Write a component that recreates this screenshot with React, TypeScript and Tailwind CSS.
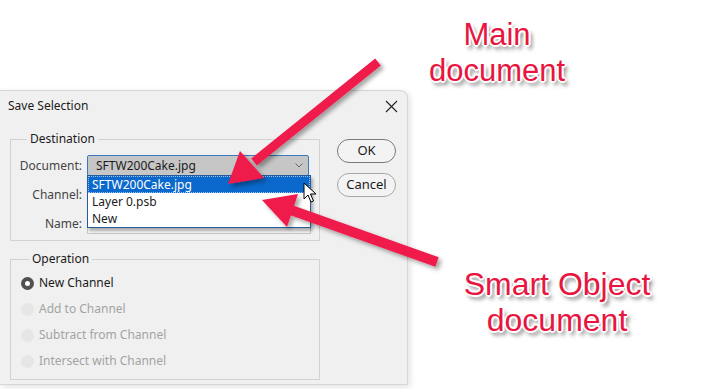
import type React from "react"

const ui = "font-['Noto_Sans','Open_Sans',sans-serif] text-[12px] text-[#1b1b1b]"
const note =
  "absolute w-[220px] text-center font-['Liberation_Sans',Arial,sans-serif] leading-[36px] text-[#e8153f] [text-shadow:1px_1px_0_#fff,-1px_-1px_0_#fff,1px_-1px_0_#fff,-1px_1px_0_#fff,0_2px_0_#fff,2px_0_0_#fff,0_-2px_0_#fff,-2px_0_0_#fff,3px_4px_4px_rgba(0,0,0,0.6)]"

const Radio: React.FC<{ label: string; on?: boolean }> = ({ label, on }) => (
  <div className="flex items-center h-[20px] gap-[5px]">
    {on ? (
      <span className="w-[13px] h-[13px] rounded-full bg-[#505050] flex items-center justify-center">
        <span className="w-[5px] h-[5px] rounded-full bg-white" />
      </span>
    ) : (
      <span className="w-[13px] h-[13px] rounded-full bg-[#e6e6e6]" />
    )}
    <span className={on ? "text-[#1b1b1b]" : "text-[#a3a3a3]"}>{label}</span>
  </div>
)

const Arrows: React.FC = () => (
  <svg className="absolute inset-0 pointer-events-none" width="716" height="389" viewBox="0 0 716 389">
    <defs>
      <filter id="sh" x="-20%" y="-20%" width="140%" height="140%">
        <feDropShadow dx="3" dy="3" stdDeviation="2" floodColor="#000" floodOpacity="0.35" />
      </filter>
    </defs>
    <g filter="url(#sh)" fill="#ef1a4b">
      <line x1="378" y1="62" x2="254" y2="162" stroke="#ef1a4b" strokeWidth="9" />
      <polygon points="228,184 240,151 264,178" />
      <line x1="437" y1="262" x2="288" y2="209" stroke="#ef1a4b" strokeWidth="10" />
      <polygon points="262,200 298,194 287,227" />
    </g>
    <path d="M304 183 L304 199 L308 195 L311 202 L313.5 201 L310.5 194 L316 194 Z" fill="#fff" stroke="#000" strokeWidth="1" strokeLinejoin="round" />
  </svg>
)

export default function App() {
  return (
    <div className="relative w-[716px] h-[389px] bg-white overflow-hidden">
      <div className={`${ui} mt-[90px] w-[408px] h-[295px] bg-[#f0f0f0] rounded-tr-lg border-r border-t border-b border-[#d6d6d6] shadow-[2px_2px_6px_rgba(0,0,0,0.12)]`}>
        <div className="flex items-center justify-between h-[30px] pl-[8px] pr-[9px]">
          <span>Save Selection</span>
          <svg width="13" height="13" viewBox="0 0 13 13">
            <path d="M1 1 L12 12 M12 1 L1 12" stroke="#222" strokeWidth="1.1" />
          </svg>
        </div>
        <div className="flex pl-[10px] pt-[10px] gap-[17px]">
          <div className="w-[310px] flex flex-col gap-[10px]">
            <fieldset className="border border-[#d2d2d2] p-0">
              <legend className="ml-[16px] px-[3px] leading-[16px]">Destination</legend>
              <div className="relative flex flex-col gap-[8px] pt-[8px] pb-[6px]">
                <div className="flex items-center h-[21px]">
                  <span className="w-[71px] text-right text-[#444]">Document:</span>
                  <div className="ml-[5px] w-[222px] h-[21px] flex items-center justify-between pl-[8px] pr-[5px] bg-[#c6c6c6] border border-[#3a78c2] rounded-[2px]">
                    <span>SFTW200Cake.jpg</span>
                    <svg width="8" height="5" viewBox="0 0 8 5">
                      <path d="M0.5 0.5 L4 4 L7.5 0.5" fill="none" stroke="#666" strokeWidth="1" />
                    </svg>
                  </div>
                </div>
                <div className="flex items-center h-[21px]">
                  <span className="w-[71px] text-right text-[#444]">Channel:</span>
                  <div className="ml-[5px] w-[224px] h-[21px] border border-[#bbb] bg-white" />
                </div>
                <div className="flex items-center h-[21px]">
                  <span className="w-[71px] text-right text-[#444]">Name:</span>
                  <div className="ml-[5px] w-[224px] h-[20px] border border-[#c8c8c8] bg-[#f7f7f7]" />
                </div>
                <div className="absolute left-[76px] top-[28px] w-[224px] h-[53px] bg-white border border-[#255d9c] shadow-[2px_3px_3px_rgba(0,0,0,0.3)]">
                  <div className="h-[17px] flex items-center pl-[4px] bg-[#0b68cc] text-white outline-1 outline-dotted outline-[#9cc3ef] -outline-offset-1">SFTW200Cake.jpg</div>
                  <div className="h-[17px] flex items-center pl-[4px]">Layer 0.psb</div>
                  <div className="h-[17px] flex items-center pl-[4px]">New</div>
                </div>
              </div>
            </fieldset>
            <fieldset className="border border-[#d2d2d2] p-0">
              <legend className="ml-[18px] px-[3px] leading-[16px]">Operation</legend>
              <div className="flex flex-col gap-[6px] pt-[6px] pb-[8px] pl-[10px]">
                <Radio label="New Channel" on />
                <Radio label="Add to Channel" />
                <Radio label="Subtract from Channel" />
                <Radio label="Intersect with Channel" />
              </div>
            </fieldset>
          </div>
          <div className="flex flex-col gap-[10px] pt-[8px]">
            <button className="w-[59px] h-[24px] rounded-full border border-[#7a7a7a] bg-[#f3f3f3] text-[13px]">OK</button>
            <button className="w-[59px] h-[24px] rounded-full border border-[#a8a8a8] bg-[#f3f3f3] text-[13px]">Cancel</button>
          </div>
        </div>
      </div>
      <Arrows />
      <div className={`${note} text-[31px] left-[387px] top-[17px]`}>
        Main
        <br />
        document
      </div>
      <div className={`${note} text-[32px] left-[447px] top-[266px]`}>
        Smart Object
        <br />
        document
      </div>
    </div>
  )
}
